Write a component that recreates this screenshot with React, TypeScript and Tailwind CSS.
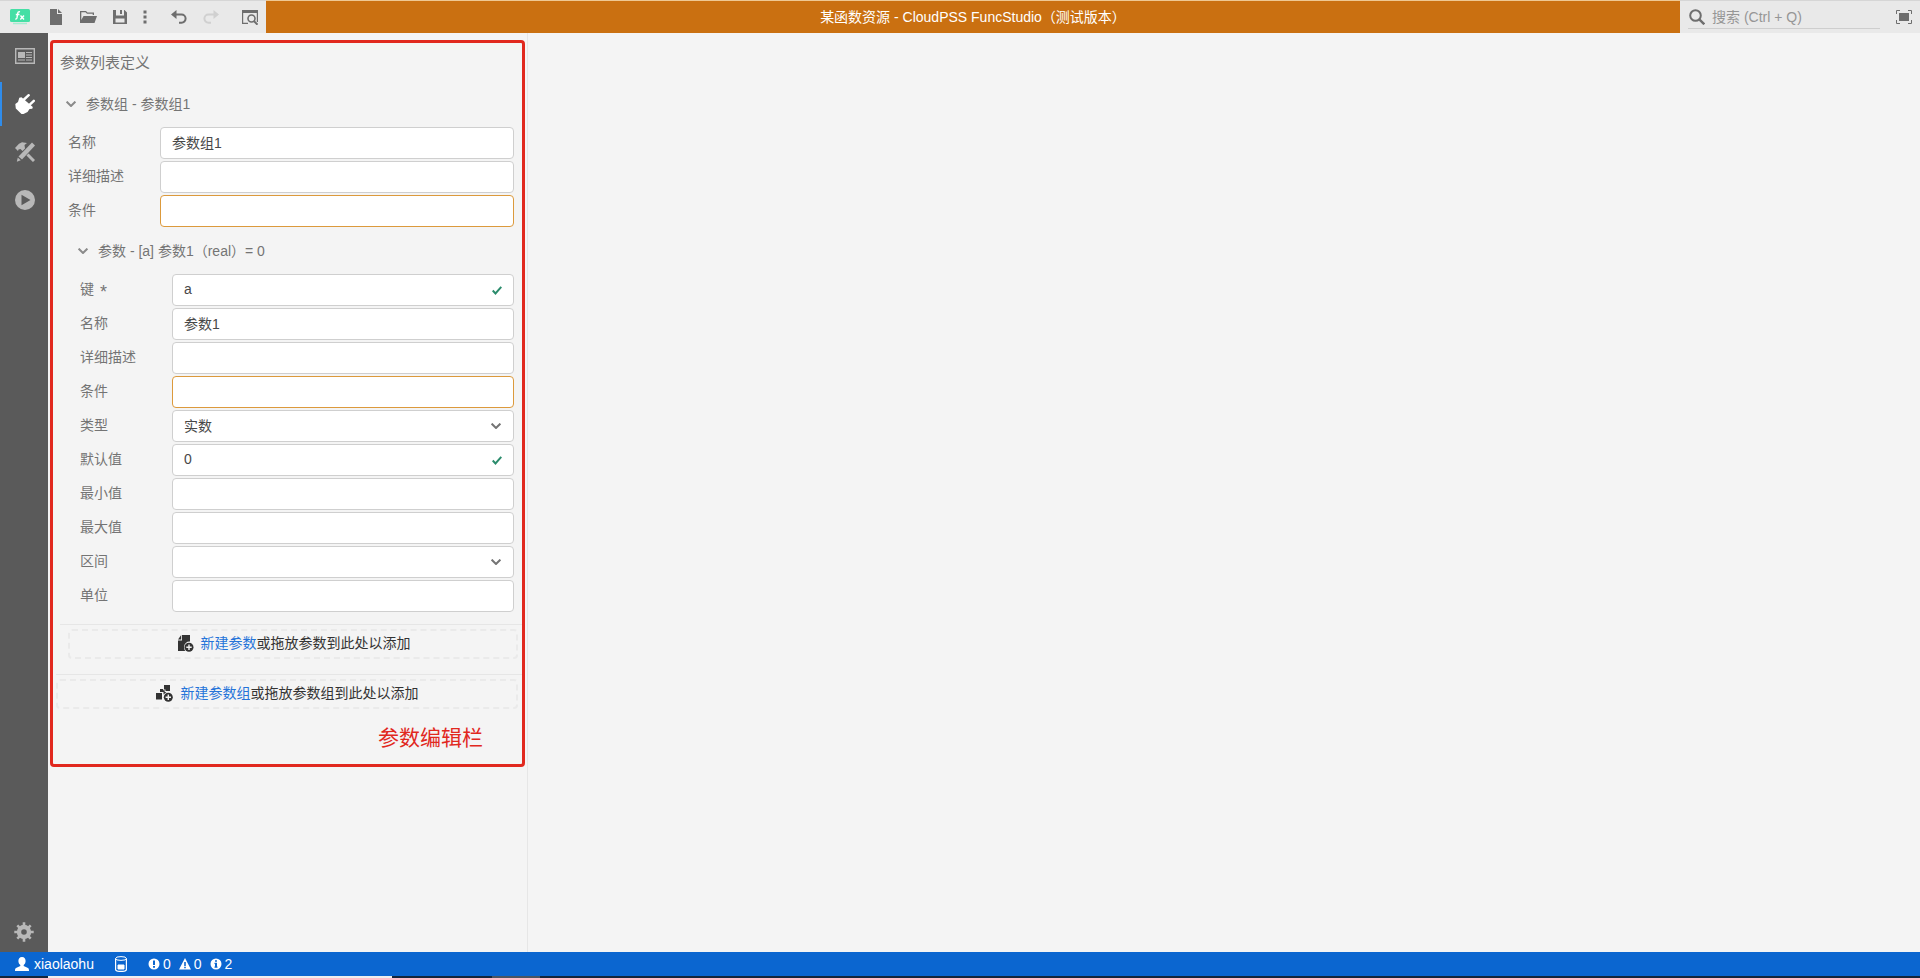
import { useState, type ReactNode } from "react";

type IconProps = { className?: string };

function Svg({ className = "h-4 w-4", children }: IconProps & { children: ReactNode }) {
  return (
    <svg className={className} viewBox="0 0 16 16" fill="currentColor" aria-hidden="true">
      {children}
    </svg>
  );
}

const NewFileIcon = () => (
  <Svg>
    <path d="M2 0h7v5h5v11H2z M10 0l4 4h-4z" />
  </Svg>
);

const OpenIcon = () => (
  <svg className="h-4 w-[17px]" viewBox="0 0 17 16" fill="currentColor" aria-hidden="true">
    <path d="M0 14V2h6l1.500 1.500H14V6h-1.300V4.800H7L5.500 3.300H1.300V11L3.500 7H17l-2.500 7z" />
  </svg>
);

const SaveIcon = () => (
  <Svg>
    <path fillRule="evenodd" d="M1 1h11.500L15 3.500V15H1zM4 1v5.500h8V1h-2v4H8V1zM3.500 9.500v4h9v-4z" />
  </Svg>
);

const MoreIcon = () => (
  <Svg>
    <path d="M6.500 1.500h3v3h-3zM6.500 6.500h3v3h-3zM6.500 11.500h3v3h-3z" />
  </Svg>
);

const UndoIcon = () => (
  <Svg>
    <path d="M0 5.500L5.500 1v9z" />
    <path d="M3 5.500h7.500a4 4 0 0 1 0 8.200H8" fill="none" stroke="currentColor" strokeWidth="2" />
  </Svg>
);

const RedoIcon = () => (
  <Svg>
    <path d="M16 5.500L10.500 1v9z" />
    <path d="M13 5.500H5.500a4 4 0 0 0 0 8.200H8" fill="none" stroke="currentColor" strokeWidth="2" />
  </Svg>
);

const PreviewIcon = () => (
  <Svg>
    <path d="M0 1h16v12h-1.200V4H1.200v9.800H6V15H0z" />
    <circle cx="9.500" cy="9.500" r="3.500" fill="none" stroke="currentColor" strokeWidth="1.600" />
    <path d="M11.800 12l3.700 3.700" stroke="currentColor" strokeWidth="2" />
  </Svg>
);

const SearchIcon = () => (
  <Svg>
    <circle cx="6.500" cy="6.500" r="5.300" fill="none" stroke="currentColor" strokeWidth="2" />
    <path d="M10.300 10.300l5 5" stroke="currentColor" strokeWidth="2.400" />
  </Svg>
);

const FullscreenIcon = () => (
  <Svg>
    <path d="M3 4h10v8H3z" />
    <path d="M.500 5V1.500H4M12 1.500h3.500V5M15.500 11v3.500H12M4 14.500H.500V11" fill="none" stroke="currentColor" />
  </Svg>
);

const OverviewIcon = () => (
  <svg className="h-4 w-5" viewBox="0 0 20 16" fill="currentColor" aria-hidden="true">
    <path d="M.700.700h18.600v14.600H.700z" fill="none" stroke="currentColor" strokeWidth="1.400" />
    <path d="M3 4h7v6H3z" />
    <path d="M11 4.500h6M11 7h6M11 9.500h6M3 12h7M11 12h6" stroke="currentColor" strokeWidth="1.200" />
  </svg>
);

const PlugIcon = () => (
  <svg className="h-5 w-5" viewBox="0 0 20 20" fill="currentColor" aria-hidden="true">
    <path d="M.300 10L3 8l1.300-4.200 2.200-.500L17.800 13l-.500 1.800-2.800.200-2 3-4 2h-2L.800 14.500z" />
    <path d="M8.500 6l5.200-4.800M14 11.300l4.800-4.500" stroke="currentColor" strokeWidth="2.400" strokeLinecap="round" />
  </svg>
);

const ToolsIcon = () => (
  <svg className="h-5 w-5" viewBox="0 0 20 20" fill="currentColor" aria-hidden="true">
    <path d="M0 6L4 1.800 7 .300l5 .700-2.500 2L10 6.500 7.500 9 5.500 7 3.500 7.500 3 9z" />
    <path d="M17 .500L20 3.500 7 17.500l-3.500-3z" />
    <path d="M2.800 15.500L5.800 18.300 1.800 19.800z" />
    <path d="M12.500 12.500l6.500 6.500" stroke="currentColor" strokeWidth="3" />
  </svg>
);

const RunIcon = () => (
  <svg className="h-5 w-5" viewBox="0 0 20 20" fill="currentColor" aria-hidden="true">
    <path fillRule="evenodd" d="M10 0a10 10 0 1 1 0 20 10 10 0 0 1 0-20zM6.500 4.700v10.600l9-5.300z" />
  </svg>
);

const GearIcon = () => (
  <svg className="h-5 w-5" viewBox="0 0 20 20" aria-hidden="true">
    <g stroke="currentColor" strokeWidth="2.600">
      <path d="M10 .300v4M10 15.700v4M.300 10h4M15.700 10h4M3.300 3.300l3 3M13.700 13.700l3 3M3.300 16.700l3-3M13.700 6.300l3-3" />
      <circle cx="10" cy="10" r="5" fill="none" strokeWidth="4.400" />
    </g>
  </svg>
);

const UserIcon = () => (
  <Svg>
    <path d="M8 1c2.500 0 3.600 1.700 3.600 4 0 1.800-.900 3.300-1.900 4v1l4.300 2c.800.400 1 1.500 1 3H1c0-1.500.200-2.600 1-3l4.300-2V9c-1-.700-1.900-2.200-1.900-4 0-2.300 1.100-4 3.600-4z" />
  </Svg>
);

const DatabaseIcon = () => (
  <svg className="h-4 w-3" viewBox="0 0 12 16" fill="none" stroke="currentColor" aria-hidden="true">
    <path d="M.600 2.500v11c0 2.600 10.800 2.600 10.800 0v-11" strokeWidth="1.200" />
    <ellipse cx="6" cy="2.500" rx="5.400" ry="1.900" />
    <path d="M3 9h6v4H3z" fill="currentColor" />
  </svg>
);

const ErrorIcon = () => (
  <svg className="h-3 w-3" viewBox="0 0 12 12" fill="currentColor" aria-hidden="true">
    <path fillRule="evenodd" d="M6 .500a5.500 5.500 0 1 1 0 11 5.500 5.500 0 0 1 0-11zM5 2.500v4.500h2V2.500zM5 8v1.700h2V8z" />
  </svg>
);

const WarningIcon = () => (
  <svg className="h-3 w-3" viewBox="0 0 12 12" fill="currentColor" aria-hidden="true">
    <path fillRule="evenodd" d="M6 0l6 11.500H0zM5.200 4v4h1.600V4zM5.200 8.800v1.500h1.600V8.800z" />
  </svg>
);

const InfoIcon = () => (
  <svg className="h-3 w-3" viewBox="0 0 12 12" fill="currentColor" aria-hidden="true">
    <path fillRule="evenodd" d="M6 .500a5.500 5.500 0 1 1 0 11 5.500 5.500 0 0 1 0-11zM5 2.200v1.600h2V2.200zM4.500 4.800V6H5v2.500h-.500v1.200h3V8.500H7V4.800z" />
  </svg>
);

const ChevronIcon = ({ className = "" }: IconProps) => (
  <svg className={`h-[6px] w-[10px] shrink-0 ${className}`} viewBox="0 0 10 6" fill="none" stroke="currentColor" aria-hidden="true">
    <path d="M.600.600L5 5 9.400.600" strokeWidth="2" />
  </svg>
);

const CheckIcon = () => (
  <svg className="pointer-events-none absolute top-3 right-3 h-[9px] w-[10px] text-[#2b8c6c]" viewBox="0 0 10 9" fill="none" stroke="currentColor" aria-hidden="true">
    <path d="M.700 4.500l2.800 3L9.300.800" strokeWidth="2" />
  </svg>
);

const AddParamIcon = () => (
  <svg className="h-[17px] w-4" viewBox="0 0 16 17" fill="currentColor" aria-hidden="true">
    <path d="M0 5.500h4V0h8v6.500a5.500 5.500 0 0 0-6 5.500c0 1.500.500 3 1.400 4H0zM0 4.500L3.200 0v4.500z" />
    <circle cx="11" cy="12.300" r="4.500" />
    <path d="M11 9.600V15M8.300 12.300h5.400" stroke="#f4f4f4" strokeWidth="1.400" />
  </svg>
);

const AddGroupIcon = () => (
  <svg className="h-[17px] w-[17px]" viewBox="0 0 17 17" fill="currentColor" aria-hidden="true">
    <path d="M8 0h6v6H9.500V4.500H8zM4 4h3.200v1.300h1.500V7h1.800L7.500 9.500V7H4zM0 8h6v6.500H0z" />
    <circle cx="12.300" cy="12.300" r="4.500" />
    <path d="M12.300 9.600V15M9.600 12.300H15" stroke="#f4f4f4" strokeWidth="1.400" />
  </svg>
);

type FieldDef = {
  id: string;
  label: string;
  value?: string;
  required?: boolean;
  valid?: boolean;
  code?: boolean;
  options?: string[];
};

const groupFields: FieldDef[] = [
  { id: "group-name", label: "名称", value: "参数组1" },
  { id: "group-desc", label: "详细描述" },
  { id: "group-cond", label: "条件", code: true },
];

const paramFields: FieldDef[] = [
  { id: "param-key", label: "键", value: "a", required: true, valid: true },
  { id: "param-name", label: "名称", value: "参数1" },
  { id: "param-desc", label: "详细描述" },
  { id: "param-cond", label: "条件", code: true },
  { id: "param-type", label: "类型", value: "实数", options: ["实数", "整数", "文本"] },
  { id: "param-default", label: "默认值", value: "0", valid: true },
  { id: "param-min", label: "最小值" },
  { id: "param-max", label: "最大值" },
  { id: "param-range", label: "区间", value: "", options: ["", "开区间", "闭区间"] },
  { id: "param-unit", label: "单位" },
];

const control = "block h-8 w-full rounded border bg-white px-[11px] text-sm text-[#484848] outline-none";

function Field({ field }: { field: FieldDef }) {
  return (
    <div className="flex items-center">
      <label htmlFor={field.id} className="w-[92px] shrink-0 pb-0.5 text-[#747474]">
        {field.label}
        {field.required && <span className="ml-1.5 align-[-4px] text-lg leading-4">*</span>}
      </label>
      <div className="relative min-w-0 flex-1">
        {field.options ? (
          <>
            <select id={field.id} defaultValue={field.value} className={`${control} appearance-none border-[#cfcfcf]`}>
              {field.options.map((option) => (
                <option key={option}>{option}</option>
              ))}
            </select>
            <ChevronIcon className="pointer-events-none absolute top-[13px] right-[13px] text-[#747474]" />
          </>
        ) : (
          <input
            id={field.id}
            type="text"
            defaultValue={field.value}
            className={`${control} pb-0.5 ${field.code ? "border-[#dc9a3c]" : "border-[#cfcfcf]"}`}
          />
        )}
        {field.valid && <CheckIcon />}
      </div>
    </div>
  );
}

const tools = [
  { label: "新建", icon: <NewFileIcon />, className: "ml-[18px]" },
  { label: "打开", icon: <OpenIcon />, className: "ml-4" },
  { label: "保存", icon: <SaveIcon />, className: "ml-[15px]" },
  { label: "更多", icon: <MoreIcon />, className: "ml-[9px]" },
  { label: "撤销", icon: <UndoIcon />, className: "ml-[18px]" },
  { label: "重做", icon: <RedoIcon />, className: "ml-4 text-[#d0d0d0]" },
  { label: "预览", icon: <PreviewIcon />, className: "ml-[23px]" },
];

const views = [
  { label: "总览", icon: <OverviewIcon /> },
  { label: "接口", icon: <PlugIcon />, active: true },
  { label: "实现", icon: <ToolsIcon /> },
  { label: "运行", icon: <RunIcon /> },
];

function Header() {
  return (
    <header className="flex h-[33px] shrink-0 bg-[#e9e9e9] text-[#6e6e6e]">
      <div className="flex w-[266px] shrink-0 items-center border-t border-[#d6d6d6] pl-[10px]">
        <svg className="h-4 w-5" viewBox="0 0 20 16" aria-hidden="true">
          <rect width="20" height="13" rx="1.500" fill="#45dfa5" />
          <path d="M3 14.500h14" stroke="#a5ecd0" strokeWidth="1.500" />
          <path d="M10 2.800c-1.700-.500-2.100.600-2.300 1.900l-.700 4c-.200 1-.700 1.500-1.700 1.200M5.800 5.500h3.700M10.500 6.500l3.500 4M14 6.500l-3.700 4" fill="none" stroke="#fff" strokeWidth="1.400" />
        </svg>
        {tools.map((tool) => (
          <button key={tool.label} aria-label={tool.label} className={tool.className}>
            {tool.icon}
          </button>
        ))}
      </div>
      <h1 className="flex min-w-0 flex-1 items-center justify-center border-t border-[#efc893] bg-[#ca7011] text-sm whitespace-nowrap text-white">
        某函数资源 - CloudPSS FuncStudio（测试版本）
      </h1>
      <div className="flex w-60 shrink-0 items-center justify-between border-t border-[#d6d6d6] px-2">
        <label className="flex h-6 w-48 items-center gap-[7px] border-b border-[#cecece] pl-px">
          <SearchIcon />
          <input
            type="search"
            aria-label="搜索"
            placeholder="搜索 (Ctrl + Q)"
            className="min-w-0 flex-1 bg-transparent text-sm outline-none placeholder:text-[#969696]"
          />
        </label>
        <button aria-label="全屏">
          <FullscreenIcon />
        </button>
      </div>
    </header>
  );
}

function ParamPanel() {
  const [groupOpen, setGroupOpen] = useState(true);
  const [paramOpen, setParamOpen] = useState(true);

  return (
    <aside className="w-[480px] shrink-0 border-r border-[#e6e6e6] px-0.5 pt-[7px]">
      <section className="rounded border-[3px] border-[#e1281e]">
        <h2 className="flex h-10 items-center pl-[7px] text-[15px] text-[#747474]">参数列表定义</h2>

        <button
          onClick={() => setGroupOpen(!groupOpen)}
          className="flex h-11 w-full items-center gap-[10px] pb-0.5 pl-[13px] text-[#747474]"
        >
          <ChevronIcon className="text-[#8a8a8a]" />
          参数组 - 参数组1
        </button>

        {groupOpen && (
          <>
            <div className="flex flex-col gap-0.5 pr-2 pl-[15px]">
              {groupFields.map((field) => (
                <Field key={field.id} field={field} />
              ))}
            </div>

            <button
              onClick={() => setParamOpen(!paramOpen)}
              className="flex h-[47px] w-full items-center gap-[10px] pl-[25px] text-[#747474]"
            >
              <ChevronIcon className="text-[#8a8a8a]" />
              参数 - [a] 参数1（real）= 0
            </button>

            {paramOpen && (
              <div className="flex flex-col gap-0.5 pr-2 pl-[27px]">
                {paramFields.map((field) => (
                  <Field key={field.id} field={field} />
                ))}
              </div>
            )}

            <div className="mt-3 ml-[7px] border-t border-[#e6e6e6] pt-1 pr-1 pl-2">
              <div className="flex h-[30px] items-center justify-center gap-[7px] rounded border-2 border-dashed border-[#eaeaea] pb-0.5 pl-0.5 text-[#333]">
                <AddParamIcon />
                <p>
                  <a href="#new-param" className="text-[#2473d9]">新建参数</a>或拖放参数到此处以添加
                </p>
              </div>
            </div>
          </>
        )}

        <div className="mt-[15px] ml-[3px] border-t border-[#e6e6e6] pt-1 pr-1">
          <div className="flex h-[30px] items-center justify-center gap-2 rounded border-2 border-dashed border-[#eaeaea] pb-0.5 text-[#333]">
            <AddGroupIcon />
            <p>
              <a href="#new-group" className="text-[#2473d9]">新建参数组</a>或拖放参数组到此处以添加
            </p>
          </div>
        </div>

        <p className="mt-[13px] pr-[39px] pb-2.5 text-right text-[21px] leading-8 text-[#e1281e]">参数编辑栏</p>
      </section>
    </aside>
  );
}

function StatusBar() {
  return (
    <footer className="shrink-0">
      <div className="flex h-6 items-center bg-[#0b66d0] pl-[14px] text-white">
        <button className="flex items-center gap-1">
          <UserIcon />
          xiaolaohu
        </button>
        <button aria-label="存储" className="ml-[21px]">
          <DatabaseIcon />
        </button>
        <button className="ml-[21px] flex items-center gap-2">
          <span className="flex items-center gap-[3px]">
            <ErrorIcon />0
          </span>
          <span className="flex items-center gap-[3px]">
            <WarningIcon />0
          </span>
          <span className="flex items-center gap-[3px]">
            <InfoIcon />2
          </span>
        </button>
      </div>
      <div className="flex h-0.5 bg-[#14263c]">
        <div className="ml-12 w-[344px] bg-[#eeeeee]" />
        <div className="ml-[100px] w-12 bg-[#4a5563]" />
      </div>
    </footer>
  );
}

export default function App() {
  return (
    <div className="flex min-h-screen flex-col bg-[#f4f4f4] font-['Liberation_Sans','Noto_Sans_CJK_SC',sans-serif] text-sm">
      <Header />
      <div className="flex flex-1">
        <nav className="flex w-12 shrink-0 flex-col gap-1 bg-[#5a5a5a] pt-px text-[#b8b8b8]">
          {views.map((view) => (
            <button
              key={view.label}
              aria-label={view.label}
              className={`flex h-11 items-center justify-center border-l-2 ${
                view.active ? "border-[#2f8ceb] text-white" : "border-transparent"
              }`}
            >
              {view.icon}
            </button>
          ))}
          <button aria-label="设置" className="mt-auto flex h-10 items-center justify-center">
            <GearIcon />
          </button>
        </nav>
        <ParamPanel />
        <main className="flex-1" />
      </div>
      <StatusBar />
    </div>
  );
}
